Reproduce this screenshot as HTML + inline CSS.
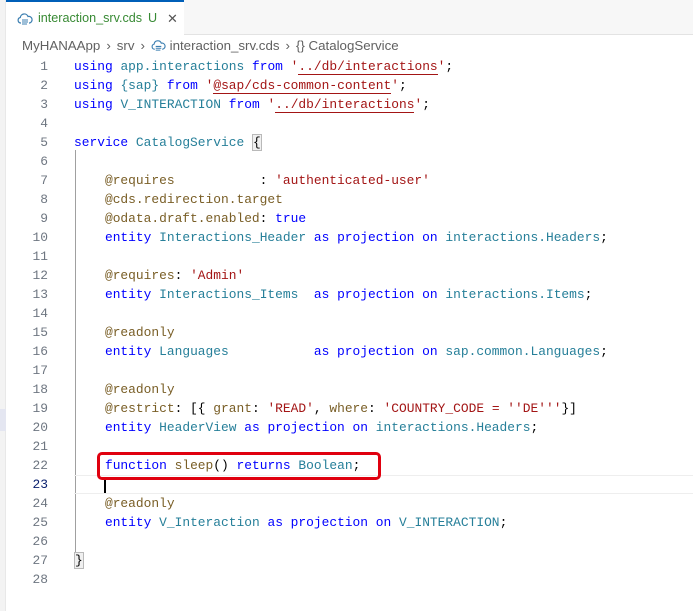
<!DOCTYPE html>
<html><head><meta charset="utf-8"><style>
*{margin:0;padding:0;box-sizing:border-box}
body{width:693px;height:611px;background:#fff;position:relative;overflow:hidden;font-family:"Liberation Sans",sans-serif}
.strip{position:absolute;left:0;top:0;width:6px;height:611px;background:#f3f3f3;border-right:1px solid #e8e8e8}
.hl{position:absolute;left:0;top:409px;width:6px;height:22px;background:#e4e6f1}
.tabbar{position:absolute;left:6px;top:0;right:0;height:35px;background:#f7f7f7;border-bottom:1px solid #e3e3e3}
.tab{position:absolute;left:6px;top:0;width:178px;height:35px;background:#fff;border-top:2px solid #005fb8}
.tab .t{position:absolute;left:32px;top:9px;font-size:12.6px;color:#388a34}
.tab .u{position:absolute;left:142px;top:9px;font-size:12.6px;color:#388a34}
.tab .x{position:absolute;left:161px;top:9px;font-size:13px;color:#555}
.bc{position:absolute;left:22px;top:38px;font-size:13.3px;color:#616161;white-space:pre}
.bc b{display:inline-block;font-weight:normal;margin:0 6px}
.ed{position:absolute;left:0;top:57px;width:693px;font-family:"Liberation Mono",monospace;font-size:12.9px}
.ln{position:absolute;left:0;width:48px;text-align:right;color:#6e7681;height:19px;line-height:19px}
.cd{position:absolute;left:74px;height:19px;line-height:19px;white-space:pre;color:#000}
.k{color:#0000ff}.i{color:#267f99}.a{color:#795e26}.s{color:#a31515}
.sq{border-bottom:1px solid #a31515}
.guide{position:absolute;left:75px;top:150px;width:1px;height:417px;background:#a0a0a0}
.cur{position:absolute;left:74px;top:475px;right:0;height:19px;border-top:1px solid #eee;border-bottom:1px solid #eee}
.caret{position:absolute;left:104px;top:477px;width:2px;height:16px;background:#000}
.box{position:absolute;left:97px;top:452px;width:284px;height:28px;border:3.5px solid #e0000f;border-radius:5px}
.br{border:1px solid #b9b9b9;background:#f0f0f0}
</style></head><body>
<div class="strip"></div><div class="hl"></div>
<div class="tabbar"></div>
<div class="tab">
<svg style="position:absolute;left:11px;top:10px" width="16" height="14" viewBox="0 0 16 14"><path d="M4 11H3.5A2.8 2.8 0 0 1 3.3 5.5 4 4 0 0 1 11 4.5 3 3 0 0 1 12.5 11H12" fill="none" stroke="#3c7fb1" stroke-width="1.2"/><path d="M5 8h6M5 10h6M5 12h5" stroke="#3c7fb1" stroke-width="1.1"/></svg>
<span class="t">interaction_srv.cds</span><span class="u">U</span><span class="x">✕</span></div>
<div class="bc">MyHANAApp<b>›</b>srv<b>›</b><svg style="vertical-align:-2px" width="15" height="13" viewBox="0 0 16 14"><path d="M4 11H3.5A2.8 2.8 0 0 1 3.3 5.5 4 4 0 0 1 11 4.5 3 3 0 0 1 12.5 11H12" fill="none" stroke="#3c7fb1" stroke-width="1.2"/><path d="M5 8h6M5 10h6M5 12h5" stroke="#3c7fb1" stroke-width="1.1"/></svg> interaction_srv.cds<b>›</b>{} CatalogService</div>
<div class="guide"></div>
<div class="cur"></div>
<div class="ed">
<div class="ln" style="top:0">1</div><div class="cd" style="top:0"><span class="k">using</span> <span class="i">app.interactions</span> <span class="k">from</span> <span class="s">'<span class="sq">../db/interactions</span>'</span>;</div>
<div class="ln" style="top:19px">2</div><div class="cd" style="top:19px"><span class="k">using</span> <span class="i">{sap}</span> <span class="k">from</span> <span class="s">'<span class="sq">@sap/cds-common-content</span>'</span>;</div>
<div class="ln" style="top:38px">3</div><div class="cd" style="top:38px"><span class="k">using</span> <span class="i">V_INTERACTION</span> <span class="k">from</span> <span class="s">'<span class="sq">../db/interactions</span>'</span>;</div>
<div class="ln" style="top:57px">4</div>
<div class="ln" style="top:76px">5</div><div class="cd" style="top:76px"><span class="k">service</span> <span class="i">CatalogService</span> <span class="br">{</span></div>
<div class="ln" style="top:95px">6</div>
<div class="ln" style="top:114px">7</div><div class="cd" style="top:114px">    <span class="a">@requires</span>           : <span class="s">'authenticated-user'</span></div>
<div class="ln" style="top:133px">8</div><div class="cd" style="top:133px">    <span class="a">@cds.redirection.target</span></div>
<div class="ln" style="top:152px">9</div><div class="cd" style="top:152px">    <span class="a">@odata.draft.enabled</span>: <span class="k">true</span></div>
<div class="ln" style="top:171px">10</div><div class="cd" style="top:171px">    <span class="k">entity</span> <span class="i">Interactions_Header</span> <span class="k">as projection on</span> <span class="i">interactions.Headers</span>;</div>
<div class="ln" style="top:190px">11</div>
<div class="ln" style="top:209px">12</div><div class="cd" style="top:209px">    <span class="a">@requires</span>: <span class="s">'Admin'</span></div>
<div class="ln" style="top:228px">13</div><div class="cd" style="top:228px">    <span class="k">entity</span> <span class="i">Interactions_Items</span>  <span class="k">as projection on</span> <span class="i">interactions.Items</span>;</div>
<div class="ln" style="top:247px">14</div>
<div class="ln" style="top:266px">15</div><div class="cd" style="top:266px">    <span class="a">@readonly</span></div>
<div class="ln" style="top:285px">16</div><div class="cd" style="top:285px">    <span class="k">entity</span> <span class="i">Languages</span>           <span class="k">as projection on</span> <span class="i">sap.common.Languages</span>;</div>
<div class="ln" style="top:304px">17</div>
<div class="ln" style="top:323px">18</div><div class="cd" style="top:323px">    <span class="a">@readonly</span></div>
<div class="ln" style="top:342px">19</div><div class="cd" style="top:342px">    <span class="a">@restrict</span>: [{ <span class="a">grant</span>: <span class="s">'READ'</span>, <span class="a">where</span>: <span class="s">'COUNTRY_CODE = ''DE'''</span>}]</div>
<div class="ln" style="top:361px">20</div><div class="cd" style="top:361px">    <span class="k">entity</span> <span class="i">HeaderView</span> <span class="k">as projection on</span> <span class="i">interactions.Headers</span>;</div>
<div class="ln" style="top:380px">21</div>
<div class="ln" style="top:399px">22</div><div class="cd" style="top:399px">    <span class="k">function</span> <span class="a">sleep</span>() <span class="k">returns</span> <span class="i">Boolean</span>;</div>
<div class="ln" style="top:418px;color:#0b216f">23</div>
<div class="ln" style="top:437px">24</div><div class="cd" style="top:437px">    <span class="a">@readonly</span></div>
<div class="ln" style="top:456px">25</div><div class="cd" style="top:456px">    <span class="k">entity</span> <span class="i">V_Interaction</span> <span class="k">as projection on</span> <span class="i">V_INTERACTION</span>;</div>
<div class="ln" style="top:475px">26</div>
<div class="ln" style="top:494px">27</div><div class="cd" style="top:494px"><span class="br">}</span></div>
<div class="ln" style="top:513px">28</div>
</div>
<div class="caret"></div>
<div class="box"></div>
</body></html>
